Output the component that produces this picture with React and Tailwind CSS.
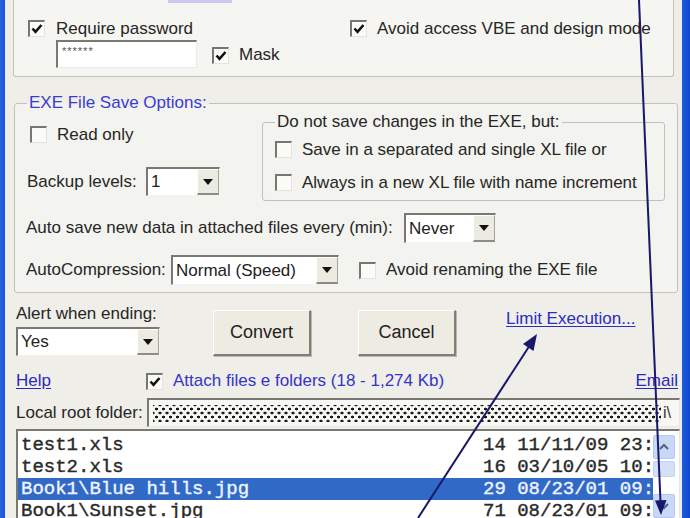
import React from 'react';

function Check({ checked }) {
  return (
    <span className="w-[17px] h-[17px] shrink-0 bg-[#fbfbf8] border-t-2 border-l-2 border-t-[#77766f] border-l-[#77766f] border-b border-r border-b-[#e4e3dc] border-r-[#e4e3dc] flex items-center justify-center">
      {checked && (
        <svg width="12" height="12" viewBox="0 0 12 12">
          <polyline points="1.5,5.5 4.5,8.8 10.5,2" fill="none" stroke="#111" strokeWidth="2.6" />
        </svg>
      )}
    </span>
  );
}

function Combo({ value, className }) {
  return (
    <div className={`flex bg-white border-t-2 border-l-2 border-t-[#7a7971] border-l-[#7a7971] border-b border-r border-b-[#f4f4ef] border-r-[#f4f4ef] ${className}`}>
      <span className="flex-1 pl-[3px] self-center text-[17px] text-[#222]">{value}</span>
      <span className="w-[22px] bg-[#ecebe2] border-b-2 border-r border-b-[#8d8b82] border-r-[#a6a49b] border-t border-l border-t-white border-l-white flex items-center justify-center">
        <svg width="10" height="6" viewBox="0 0 10 6">
          <polygon points="0,0 10,0 5,6" fill="#111" />
        </svg>
      </span>
    </div>
  );
}

function Button({ children }) {
  return (
    <button className="w-[98px] h-[46px] bg-[#edebe2] border-t border-l border-t-white border-l-white border-b-2 border-r-2 border-b-[#807f78] border-r-[#807f78] shadow-[1px_1px_0_#b9b8b0] text-[18px] text-[#222]">
      {children}
    </button>
  );
}

const rows = [
  { name: 'test1.xls', info: '14 11/11/09 23:' },
  { name: 'test2.xls', info: '16 03/10/05 10:' },
  { name: 'Book1\\Blue hills.jpg', info: '29 08/23/01 09:', sel: true },
  { name: 'Book1\\Sunset.jpg', info: '71 08/23/01 09:' },
];

export default function App() {
  return (
    <div className="relative w-[690px] h-[518px] overflow-hidden flex bg-[#efeee8] font-['Liberation_Sans',Arial,sans-serif] text-[17px] text-[#262626]">
      {/* window frame left */}
      <div className="w-[5px] bg-gradient-to-r from-[#2a63e6] to-[#1653d8]" />

      <div className="w-[677px] flex flex-col">
        {/* top group (cut off) */}
        <div className="ml-[8px] w-[661px] h-[77px] shrink-0 bg-[#f5f5f1] border-l border-r border-b border-[#c3c2b9] rounded-b-[3px]">
          <div className="ml-[154px] w-[64px] h-[3px] bg-[#c9c9f4]" />
          <div className="mt-[17px] ml-[14px] flex items-center h-[17px]">
            <div className="w-[322px] flex items-center gap-[11px]">
              <Check checked />
              <span>Require password</span>
            </div>
            <div className="flex items-center gap-[10px]">
              <Check checked />
              <span>Avoid access VBE and design mode</span>
            </div>
          </div>
          <div className="mt-[3px] ml-[42px] flex items-center">
            <div className="w-[141px] h-[28px] bg-white border-t-2 border-l-2 border-t-[#7a7971] border-l-[#7a7971] border-b border-r border-b-[#ecebe5] border-r-[#ecebe5] pl-[4px] text-[11px] text-[#555] tracking-[1px] leading-[18px]">
              ******
            </div>
            <div className="ml-[15px] mt-[2px] flex items-center gap-[10px]">
              <Check checked />
              <span>Mask</span>
            </div>
          </div>
        </div>

        {/* EXE File Save Options */}
        <fieldset className="mt-[16px] ml-[9px] w-[660px] border border-[#c3c2b9] rounded-[3px] px-[12px] pb-[7px] bg-[#f3f3ef]">
          <legend className="px-[2px] leading-[20px] text-[#3b3bd2]">EXE File Save Options:</legend>
          <div className="flex">
            <div className="w-[235px] flex flex-col">
              <div className="mt-[13px] ml-[3px] h-[17px] flex items-center gap-[10px]">
                <Check />
                <span>Read only</span>
              </div>
              <div className="mt-[24px] flex items-center">
                <span className="w-[119px]">Backup levels:</span>
                <Combo value="1" className="w-[74px] h-[29px]" />
              </div>
            </div>
            <fieldset className="-mt-[1px] w-[403px] border border-[#c3c2b9] rounded-[3px] px-[12px] pb-[9px]">
              <legend className="px-[2px] leading-[20px]">Do not save changes in the EXE, but:</legend>
              <div className="mt-[9px] h-[17px] flex items-center gap-[10px]">
                <Check />
                <span>Save in a separated and single XL file or</span>
              </div>
              <div className="mt-[16px] h-[17px] flex items-center gap-[10px]">
                <Check />
                <span>Always in a new XL file with name increment</span>
              </div>
            </fieldset>
          </div>
          <div className="mt-[12px] flex items-center">
            <span className="w-[378px] -ml-[1px]">Auto save new data in attached files every (min):</span>
            <Combo value="Never" className="w-[92px] h-[30px]" />
          </div>
          <div className="mt-[12px] flex items-center">
            <span className="w-[145px] -ml-[1px]">AutoCompression:</span>
            <Combo value="Normal (Speed)" className="w-[168px] h-[30px]" />
            <div className="ml-[20px] flex items-center gap-[10px]">
              <Check />
              <span>Avoid renaming the EXE file</span>
            </div>
          </div>
        </fieldset>

        {/* bottom controls */}
        <div className="ml-[11px] flex items-start">
          <div className="w-[144px] flex flex-col">
            <span className="mt-[11px] leading-[20px]">Alert when ending:</span>
            <Combo value="Yes" className="mt-[3px] w-[144px] h-[29px]" />
          </div>
          <div className="ml-[53px] mt-[17px]">
            <Button>Convert</Button>
          </div>
          <div className="ml-[47px] mt-[17px]">
            <Button>Cancel</Button>
          </div>
          <a className="ml-[50px] mt-[16px] leading-[20px] text-[#2b2bc6] underline underline-offset-2">Limit Execution...</a>
        </div>

        <div className="mt-[15px] ml-[11px] flex items-center h-[20px]">
          <a className="w-[130px] text-[#2a2ab8] underline underline-offset-2">Help</a>
          <Check checked />
          <span className="ml-[10px] text-[#3434c8]">Attach files e folders (18 - 1,274 Kb)</span>
          <span className="flex-1" />
          <a className="mr-[4px] text-[#2a2ab8] underline underline-offset-2">Email</a>
        </div>

        <div className="mt-[7px] ml-[11px] flex items-center">
          <span className="w-[131px]">Local root folder:</span>
          <div className="w-[533px] h-[29px] flex items-center bg-[#f7f7f3] border-t-2 border-l-2 border-t-[#7a7971] border-l-[#7a7971] border-b border-r border-b-[#e8e7e0] border-r-[#e8e7e0]">
            <div className="ml-[4px] w-[508px] h-[17px] bg-[radial-gradient(circle,#1a1a1a_1.2px,transparent_1.7px),radial-gradient(circle,#1a1a1a_1.2px,transparent_1.7px)] bg-[length:7px_8px] bg-[position:0_0,3.5px_4px]" />
            <span className="ml-[2px] text-[16px] text-[#333]">i\</span>
          </div>
        </div>

        {/* file list */}
        <div className="mt-[2px] ml-[11px] w-[664px] h-[100px] flex bg-white border-t-2 border-l-2 border-t-[#7a7971] border-l-[#7a7971] border-r border-r-[#e8e7e0] overflow-hidden">
          <div className="w-[635px] pt-[3px] font-['Liberation_Mono','Courier_New',monospace] text-[19px] leading-[22px] [-webkit-text-stroke:0.4px_currentColor]">
            {rows.map((r) => (
              <div key={r.name} className={`flex h-[22px] whitespace-nowrap ${r.sel ? 'bg-[#3169c6] text-[#eef3ff]' : 'text-[#2a2a2a]'}`}>
                <span className="w-[465px] pl-[3px]">{r.name}</span>
                <span className="w-[170px]">{r.info}</span>
              </div>
            ))}
          </div>
          <div className="w-[22px] pt-[4px] flex flex-col">
            <div className="h-[24px] bg-[#c9d8f7] border border-[#b5c8f0] rounded-[2px] flex items-center justify-center">
              <svg width="10" height="7" viewBox="0 0 10 7">
                <polyline points="1,6 5,2 9,6" fill="none" stroke="#4d6185" strokeWidth="2" />
              </svg>
            </div>
            <div className="mt-[2px] h-[17px] bg-[#d3e0f8] border border-[#c3d3f3] rounded-[2px]" />
            <div className="mt-[17px] h-[24px] bg-[#c9d8f7] border border-[#b5c8f0] rounded-[2px] flex items-center justify-center">
              <svg width="10" height="7" viewBox="0 0 10 7">
                <polyline points="1,1 5,5 9,1" fill="none" stroke="#4d6185" strokeWidth="2" />
              </svg>
            </div>
          </div>
        </div>
      </div>

      {/* window frame right */}
      <div className="w-[8px] bg-gradient-to-r from-[#1d5ae0] to-[#0f49cc]" />

      {/* annotation arrows */}
      <svg className="absolute inset-0 pointer-events-none" width="690" height="518" viewBox="0 0 690 518">
        <line x1="639" y1="0" x2="660.5" y2="502" stroke="#17176c" strokeWidth="2" />
        <polygon points="661,515 666.5,500 655,500.5" fill="#17176c" />
        <line x1="418" y1="518" x2="530" y2="345" stroke="#17176c" strokeWidth="2" />
        <polygon points="537,334 533.5,351 523,344" fill="#17176c" />
      </svg>
    </div>
  );
}
